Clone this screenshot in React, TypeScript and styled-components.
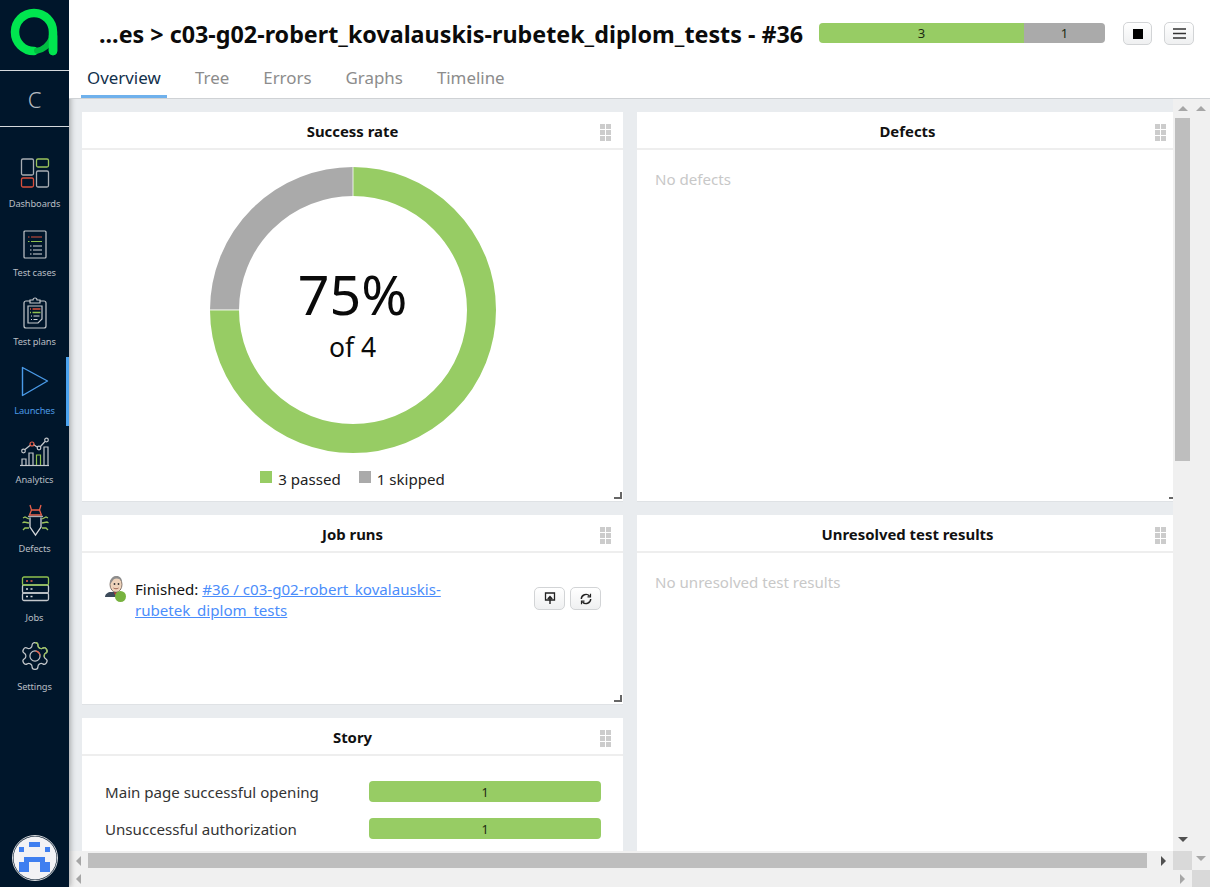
import React from 'react';
import styled, { createGlobalStyle } from 'styled-components';

const GlobalStyle = createGlobalStyle`
  html, body { margin: 0; padding: 0; height: 100%; overflow: hidden; }
  body { font-family: "Noto Sans", "Open Sans", "Liberation Sans", sans-serif; color: #111; background: #fff; }
  * { box-sizing: border-box; }
`;

const Shell = styled.div`
  display: flex;
  width: 1210px;
  height: 887px;
  overflow: hidden;
`;

const Sidebar = styled.nav`
  flex: 0 0 69px;
  display: flex;
  flex-direction: column;
  background: #00162b;
  box-shadow: 1px 0 6px rgba(0, 0, 0, 0.35);
  position: relative;
  z-index: 1;
`;

const LogoBox = styled.div`
  height: 71px;
  border-bottom: 1px solid #d5d9dd;
  display: flex;
  align-items: flex-start;
`;

const ProjectLetter = styled.div`
  height: 56px;
  border-bottom: 1px solid #d5d9dd;
  display: flex;
  align-items: center;
  justify-content: center;
  color: #b4bac0;
  font-size: 22px;
  font-weight: 300;
`;

const NavList = styled.div`
  padding-top: 23px;
  display: flex;
  flex-direction: column;
  flex: 1;
`;

const NavItem = styled.div<{ $active?: boolean }>`
  height: 69px;
  display: flex;
  flex-direction: column;
  align-items: center;
  border-right: 3px solid ${p => (p.$active ? '#4ba3f0' : 'transparent')};
  padding: 7px 0 0 3px;
  font-size: 9.3px;
  letter-spacing: -0.1px;
  color: ${p => (p.$active ? '#4c9be6' : '#b9bec4')};
  svg { display: block; flex: 0 0 32px; overflow: visible; }
`;

const NavLabel = styled.span`
  margin-top: 8px;
  line-height: 14px;
  white-space: nowrap;
`;

const AvatarBox = styled.div`
  height: 60px;
  padding-top: 8px;
  display: flex;
  justify-content: center;
  margin-right: -1px;
`;

const Main = styled.div`
  flex: 1;
  min-width: 0;
  display: flex;
  flex-direction: column;
`;

const Header = styled.header`
  height: 99px;
  background: #fff;
  border-bottom: 1px solid #cfd2d5;
  display: flex;
  flex-direction: column;
  position: relative;
  z-index: 2;
`;

const TopRow = styled.div`
  display: flex;
  align-items: center;
  height: 60px;
  padding: 7px 16px 0 30px;
`;

const Title = styled.h1`
  margin: 0;
  font-size: 23.3px;
  font-weight: 700;
  line-height: 32px;
  white-space: nowrap;
  flex: 0 0 720px;
  color: #0b0b0b;
`;

const SummaryBar = styled.div`
  flex: 0 0 286px;
  height: 20px;
  margin-top: -2px;
  display: flex;
  border-radius: 4px;
  overflow: hidden;
  font-size: 13px;
  line-height: 21px;
  text-align: center;
  box-shadow: inset 0 1px 0 rgba(0, 0, 0, 0.08);
`;

const BarPart = styled.div<{ $color: string; $grow: number }>`
  flex: ${p => p.$grow} 0 0;
  background: ${p => p.$color};
  color: #1b2a10;
`;

const Button = styled.button<{ $width?: number }>`
  width: ${p => p.$width ?? 30}px;
  height: 23px;
  padding: 0;
  border: 1px solid #d2d4d6;
  border-radius: 5px;
  background: linear-gradient(#ffffff, #eff0f1);
  display: flex;
  align-items: center;
  justify-content: center;
  flex: none;
`;

const HeaderActions = styled.div`
  display: flex;
  gap: 12px;
  margin-left: 18px;
`;

const Tabs = styled.div`
  display: flex;
  gap: 22px;
  padding-left: 12px;
  height: 38px;
`;

const Tab = styled.div<{ $active?: boolean }>`
  padding: 3px 6px 0;
  height: 38px;
  min-width: ${p => (p.$active ? '86px' : '0')};
  font-size: 16.9px;
  line-height: 29px;
  color: ${p => (p.$active ? '#12304c' : '#8c8c8c')};
  border-bottom: 3px solid ${p => (p.$active ? '#6fb1ec' : 'transparent')};
`;

const Frame = styled.div`
  flex: 1;
  min-height: 0;
  display: grid;
  grid-template-columns: 1104px 19px 18px;
  grid-template-rows: 752px 19px 17px;
  background: #f0f0f0;
`;

const Viewport = styled.div`
  grid-area: 1 / 1;
  overflow: hidden;
  background: #e9ecef;
  padding: 13px 0 0 13px;
  display: grid;
  grid-template-columns: 541px 541px;
  gap: 14px;
  align-items: start;
`;

const Column = styled.div`
  display: flex;
  flex-direction: column;
  gap: 14px;
`;

const Panel = styled.section<{ $height: number }>`
  height: ${p => p.$height}px;
  background: #fff;
  display: flex;
  flex-direction: column;
  position: relative;
  box-shadow: 0 1px 0 #dfe2e5;
`;

const PanelHead = styled.div`
  height: 38px;
  flex: none;
  padding-top: 1px;
  border-bottom: 2px solid #eeeeee;
  display: flex;
  align-items: center;
  justify-content: center;
  font-size: 14.9px;
  font-weight: 700;
  color: #111;
  position: relative;
`;

const Grip = styled.div`
  position: absolute;
  right: 12px;
  top: 12px;
  display: grid;
  grid-template-columns: 5px 5px;
  grid-auto-rows: 5px;
  gap: 1px;
  span { background: #cccccc; }
`;

const ResizeHandle = styled.div`
  position: absolute;
  right: 1px;
  bottom: 2px;
  width: 8px;
  height: 7px;
  border-right: 2px solid #666;
  border-bottom: 2px solid #666;
`;

const EmptyText = styled.div`
  padding: 19px 18px;
  font-size: 15.1px;
  line-height: 20px;
  color: #c8c8c8;
`;

const DonutBox = styled.div`
  position: relative;
  display: flex;
  justify-content: center;
  padding: 17px 0 0 1px;
  svg { display: block; }
`;

const DonutLabel = styled.div`
  position: absolute;
  inset: 17px 0 auto;
  height: 286px;
  padding-top: 5px;
  display: flex;
  flex-direction: column;
  align-items: center;
  justify-content: center;
`;

const Percent = styled.div`
  font-size: 55.5px;
  line-height: 64px;
  color: #0a0a0a;
`;

const OfTotal = styled.div`
  font-size: 26.5px;
  line-height: 32px;
  margin-top: 5px;
  color: #0a0a0a;
`;

const Legend = styled.div`
  display: flex;
  justify-content: center;
  gap: 18px;
  margin-top: 15px;
  font-size: 15.1px;
  line-height: 22px;
  color: #222;
`;

const LegendItem = styled.div`
  display: flex;
  align-items: center;
  gap: 6px;
`;

const Swatch = styled.span<{ $color: string }>`
  width: 12px;
  height: 12px;
  margin-top: -4px;
  background: ${p => p.$color};
`;

const JobRow = styled.div`
  display: flex;
  padding: 23px 22px 0 23px;
`;

const JobAvatar = styled.div`
  position: relative;
  flex: 0 0 30px;
  height: 26px;
`;

const StatusDot = styled.span`
  position: absolute;
  left: 10px;
  top: 15px;
  width: 11px;
  height: 11px;
  border-radius: 50%;
  background: #77b23f;
`;

const JobText = styled.div`
  flex: 1;
  font-size: 15.1px;
  line-height: 21px;
  margin-top: 3px;
  color: #111;
  a { color: #4b8dfb; text-decoration: underline; }
`;

const JobActions = styled.div`
  display: flex;
  gap: 5px;
  margin-top: 11px;
`;

const StoryList = styled.div`
  display: grid;
  grid-template-columns: 264px 232px;
  grid-auto-rows: 21px;
  row-gap: 16px;
  padding: 25px 0 0 23px;
  align-items: center;
`;

const StoryLabel = styled.div`
  font-size: 15.1px;
  color: #333;
  white-space: nowrap;
`;

const StoryBar = styled.div`
  height: 21px;
  background: #97cc64;
  border-radius: 4px;
  text-align: center;
  font-size: 12.5px;
  line-height: 23px;
  color: #1b2a10;
`;

const VTrack = styled.div<{ $outer?: boolean }>`
  grid-column: ${p => (p.$outer ? 3 : 2)};
  grid-row: ${p => (p.$outer ? '1 / 3' : 1)};
  display: flex;
  flex-direction: column;
  align-items: center;
  background: #f0f0f0;
`;

const HTrack = styled.div<{ $outer?: boolean }>`
  grid-column: ${p => (p.$outer ? '1 / 3' : 1)};
  grid-row: ${p => (p.$outer ? 3 : 2)};
  display: flex;
  align-items: center;
  background: #f0f0f0;
`;

const VThumb = styled.div`
  width: 15px;
  height: 343px;
  background: #bebebe;
`;

const HThumb = styled.div`
  width: 1059px;
  height: 15px;
  background: #bebebe;
`;

const ArrowCell = styled.div<{ $size: number; $push?: boolean }>`
  flex: 0 0 ${p => p.$size}px;
  display: flex;
  align-items: center;
  justify-content: center;
  ${p => (p.$push ? 'margin-top: auto;' : '')}
`;

const HArrowCell = styled.div<{ $width: number; $push?: boolean }>`
  flex: 0 0 ${p => p.$width}px;
  display: flex;
  align-items: center;
  justify-content: center;
  ${p => (p.$push ? 'margin-left: auto;' : '')}
`;

const Triangle = styled.span<{ $dir: 'up' | 'down' | 'left' | 'right'; $color: string }>`
  width: 0;
  height: 0;
  border-style: solid;
  border-color: transparent;
  ${p =>
    p.$dir === 'up'
      ? `border-width: 0 5px 5px; border-bottom-color: ${p.$color};`
      : p.$dir === 'down'
      ? `border-width: 5px 5px 0; border-top-color: ${p.$color};`
      : p.$dir === 'left'
      ? `border-width: 5px 5px 5px 0; border-right-color: ${p.$color};`
      : `border-width: 5px 0 5px 5px; border-left-color: ${p.$color};`}
`;

const Corner = styled.div<{ $outer?: boolean }>`
  grid-column: ${p => (p.$outer ? 3 : 2)};
  grid-row: ${p => (p.$outer ? 3 : 2)};
  background: #d9d9d9;
`;

const GREY = '#a8adb3';

const GripDots = () => (
  <Grip>
    {[0, 1, 2, 3, 4, 5].map(i => (
      <span key={i} />
    ))}
  </Grip>
);

const Logo = () => (
  <svg width="69" height="70" viewBox="0 0 69 70" fill="none">
    <path d="M34 51 A19 19 0 1 1 53 32 V51" stroke="#00e54f" strokeWidth="8.5" strokeLinecap="round" />
    <path d="M37 50.7 C43 50 49 45 52 38" stroke="#00bd41" strokeWidth="6" strokeLinecap="round" />
    <path d="M53 36 V51" stroke="#00e54f" strokeWidth="8.5" strokeLinecap="round" />
  </svg>
);

const DashboardsIcon = () => (
  <svg width="30" height="32" viewBox="0 0 30 32" fill="none" strokeWidth="1.3">
    <rect x="1.5" y="2" width="12" height="16" rx="1.5" stroke={GREY} />
    <rect x="16.5" y="2" width="12" height="8" rx="1.5" stroke="#9ac35b" />
    <rect x="1.5" y="21" width="12" height="9" rx="1.5" stroke="#d9503c" />
    <rect x="16.5" y="14" width="12" height="16" rx="1.5" stroke={GREY} />
  </svg>
);

const TestCasesIcon = () => (
  <svg width="30" height="32" viewBox="0 0 30 32" fill="none" strokeWidth="1.2">
    <g transform="translate(0 3)">
      <rect x="4" y="2" width="22" height="27" rx="1" stroke="#c4c8cc" />
      <path d="M8 8h1.5M11 8h11" stroke="#d9503c" />
      <path d="M8 12.5h1.5M11 12.5h11" stroke="#8fc14f" />
      <path d="M10 17h1.500M13 17h9M10 21h1.500M13 21h9M10 25h1.500M13 25h9" stroke="#d5d8db" />
    </g>
  </svg>
);

const TestPlansIcon = () => (
  <svg width="30" height="32" viewBox="0 0 30 32" fill="none" strokeWidth="1.2">
    <path d="M10 6H6a2 2 0 0 0-2 2v23a2 2 0 0 0 2 2h18a2 2 0 0 0 2-2V8a2 2 0 0 0-2-2h-4" stroke="#c4c8cc" />
    <path d="M10 8V5h3a2 2 0 0 1 4 0h3v3z" stroke="#c4c8cc" />
    <path d="M8 11h14v13l-4 4H8z" stroke="#c4c8cc" />
    <path d="M10 14h1M12.500 14h8" stroke="#d9503c" strokeWidth="1.500" />
    <path d="M10 17.500h1M12.500 17.500h8" stroke="#8fc14f" strokeWidth="1.500" />
    <path d="M11 21h1M13.500 21h6M11 24.500h1M13.500 24.500h4" stroke="#d5d8db" />
  </svg>
);

const LaunchesIcon = () => (
  <svg width="30" height="32" viewBox="0 0 30 32" fill="none">
    <path d="M2.500 3.500 L27.500 17 L2.500 31.500 Z" stroke="#4a9be8" strokeWidth="1.400" strokeLinejoin="round" />
  </svg>
);

const AnalyticsIcon = () => (
  <svg width="30" height="32" viewBox="0 0 30 32" fill="none" strokeWidth="1.2">
    <g transform="translate(0 3)">
      <path d="M0 29.500h29" stroke="#c4c8cc" />
      <path d="M2 29v-6h4v6M9 29V17h4v12M24 29V11h4v18" stroke="#c4c8cc" />
      <path d="M16.500 29V19h4v10" stroke="#8fc14f" />
      <path d="M5 13.500 L10.500 9M13.500 8.500 L17 11M20.500 10.500 L25 5.500" stroke="#c4c8cc" />
      <circle cx="3.500" cy="15" r="1.800" stroke="#c4c8cc" />
      <circle cx="12" cy="8" r="2" stroke="#e8604a" />
      <circle cx="19" cy="12" r="1.800" stroke="#c4c8cc" />
      <circle cx="26.500" cy="4" r="1.800" stroke="#c4c8cc" />
    </g>
  </svg>
);

const DefectsIcon = () => (
  <svg width="30" height="32" viewBox="0 0 30 32" fill="none" strokeWidth="1.3">
    <path d="M10 3 L11.500 8 L9.500 13 H21.500 L19.500 8 L21 3 M11.500 8 H19.500" stroke="#e8604a" />
    <path d="M8 14.500 H23" stroke="#a8adb3" />
    <path d="M10 15.500 V25 L15.500 33 L21 25 V15.500" stroke="#d5d8db" />
    <path d="M9 17 L5 15 L3 16 M9 21 L4 20 L2.500 21 M9 26 L5 26 L3 28" stroke="#9ac35b" />
    <path d="M22 17 L26 15 L28 16 M22 21 L27 20 L28.500 21 M22 26 L26 26 L28 28" stroke="#9ac35b" />
  </svg>
);

const JobsIcon = () => (
  <svg width="30" height="32" viewBox="0 0 30 32" fill="none" strokeWidth="1.3">
    <rect x="2.500" y="14" width="26" height="8" rx="1.500" stroke="#c4c8cc" />
    <rect x="2.500" y="22" width="26" height="7.500" rx="1.500" stroke="#c4c8cc" />
    <rect x="2.500" y="6" width="26" height="8" rx="1.500" stroke="#8fc14f" />
    <path d="M6 10h2M10.500 10h2" stroke="#e8604a" strokeWidth="1.600" />
    <path d="M6 18h2M10.500 18h2M6 25.500h2M10.500 25.500h2" stroke="#d5d8db" strokeWidth="1.600" />
  </svg>
);

const GEAR =
  'M12.22 2h-.44a2 2 0 0 0-2 2v.18a2 2 0 0 1-1 1.73l-.43.25a2 2 0 0 1-2 0l-.15-.08a2 2 0 0 0-2.73.73l-.22.38a2 2 0 0 0 .73 2.73l.15.1a2 2 0 0 1 1 1.72v.51a2 2 0 0 1-1 1.74l-.15.09a2 2 0 0 0-.73 2.73l.22.38a2 2 0 0 0 2.73.73l.15-.08a2 2 0 0 1 2 0l.43.25a2 2 0 0 1 1 1.73V20a2 2 0 0 0 2 2h.44a2 2 0 0 0 2-2v-.18a2 2 0 0 1 1-1.73l.43-.25a2 2 0 0 1 2 0l.15.08a2 2 0 0 0 2.73-.73l.22-.39a2 2 0 0 0-.73-2.73l-.15-.08a2 2 0 0 1-1-1.74v-.5a2 2 0 0 1 1-1.74l.15-.09a2 2 0 0 0 .73-2.73l-.22-.38a2 2 0 0 0-2.73-.73l-.15.08a2 2 0 0 1-2 0l-.43-.25a2 2 0 0 1-1-1.73V4a2 2 0 0 0-2-2z';

const SettingsIcon = () => (
  <svg width="32" height="32" viewBox="0 0 24 24" fill="none" strokeWidth="0.9">
    <defs>
      <clipPath id="gear-green">
        <path d="M12 0h12v13H12z" />
      </clipPath>
    </defs>
    <path d={GEAR} stroke="#c4c8cc" />
    <path d={GEAR} stroke="#9ac35b" clipPath="url(#gear-green)" />
    <circle cx="12" cy="12" r="3.800" stroke="#c4c8cc" />
    <path d="M12.500 8.300a3.800 3.800 0 0 1 3.300 3.200" stroke="#e8604a" />
  </svg>
);

const Avatar = () => (
  <svg width="46" height="46" viewBox="0 0 46 46">
    <circle cx="23" cy="23" r="22.500" fill="#00162b" stroke="#d8dbde" />
    <circle cx="23" cy="23" r="21.500" fill="#f2f2f5" />
    <g fill="#3f7ff0">
      <rect x="17" y="7" width="11" height="5" />
      <rect x="7" y="12" width="5" height="5" />
      <rect x="33" y="12" width="5" height="5" />
      <rect x="12" y="22" width="21" height="5" />
      <rect x="7" y="27" width="10" height="10" />
      <rect x="28" y="27" width="10" height="10" />
    </g>
  </svg>
);

const JenkinsHead = () => (
  <svg width="20" height="22" viewBox="0 0 20 22">
    <path d="M0 21c0-3 3-5 6-5h6l2 5z" fill="#3c4a5a" />
    <ellipse cx="11" cy="8.500" rx="6" ry="7.800" fill="#eed3bb" stroke="#6b5a50" strokeWidth="0.800" />
    <path d="M5 8c-.5-5 3-8 6.500-8s5.500 2.500 5.500 6l-2-2.500c-2.500-1.500-5-1-6.500 0-1 1-1.500 3-3.500 4.500z" fill="#8d8d8d" />
    <circle cx="9.500" cy="8" r="0.900" fill="#333" />
    <circle cx="13.500" cy="8" r="0.900" fill="#333" />
    <path d="M8.500 12c1.500 1 3.500 1 5 0" stroke="#8a4a3a" strokeWidth="0.800" fill="none" />
    <path d="M9 16l2 1 2-1-1 3h-2z" fill="#c33" />
  </svg>
);

const StopIcon = () => (
  <svg width="10" height="10" viewBox="0 0 10 10">
    <rect width="10" height="10" fill="#000" />
  </svg>
);

const MenuIcon = () => (
  <svg width="13" height="11" viewBox="0 0 13 11">
    <path d="M0 1h13M0 5.500h13M0 10h13" stroke="#333" strokeWidth="1.600" />
  </svg>
);

const RerunIcon = () => (
  <svg width="12" height="13" viewBox="0 0 12 13" fill="none">
    <path d="M1.500 1h9v7h-9z" stroke="#222" strokeWidth="1.300" />
    <path d="M6 12V5M3.800 7L6 4.500 8.200 7" stroke="#222" strokeWidth="1.400" />
  </svg>
);

const RefreshIcon = () => (
  <svg width="12" height="12" viewBox="0 0 12 12" fill="none" stroke="#222" strokeWidth="1.400">
    <path d="M1.300 6A4.700 4.700 0 0 1 9.500 3" />
    <path d="M10.700 6A4.700 4.700 0 0 1 2.500 9" />
    <path d="M10.500 0.800V3.800H7.500M1.500 11.200V8.200H4.500" strokeWidth="1.200" />
  </svg>
);

const Donut = () => {
  const r = 128.5;
  const c = 2 * Math.PI * r;
  return (
    <svg width="286" height="286" viewBox="0 0 286 286">
      <g transform="rotate(-90 143 143)" fill="none" strokeWidth="29">
        <circle cx="143" cy="143" r={r} stroke="#97cc64" strokeDasharray={`${c * 0.75} ${c}`} />
        <circle cx="143" cy="143" r={r} stroke="#aaaaaa" strokeDasharray={`${c * 0.25} ${c}`} strokeDashoffset={-c * 0.75} />
      </g>
      <path d="M143 0v29M0 143h29" stroke="#fff" strokeWidth="0.800" />
    </svg>
  );
};

const navItems = [
  { label: 'Dashboards', icon: <DashboardsIcon /> },
  { label: 'Test cases', icon: <TestCasesIcon /> },
  { label: 'Test plans', icon: <TestPlansIcon /> },
  { label: 'Launches', icon: <LaunchesIcon />, active: true },
  { label: 'Analytics', icon: <AnalyticsIcon /> },
  { label: 'Defects', icon: <DefectsIcon /> },
  { label: 'Jobs', icon: <JobsIcon /> },
  { label: 'Settings', icon: <SettingsIcon /> },
];

const tabs = ['Overview', 'Tree', 'Errors', 'Graphs', 'Timeline'];

const App: React.FC = () => {
  return (
    <Shell>
      <GlobalStyle />
      <Sidebar>
        <LogoBox>
          <Logo />
        </LogoBox>
        <ProjectLetter>C</ProjectLetter>
        <NavList>
          {navItems.map(item => (
            <NavItem key={item.label} $active={item.active}>
              {item.icon}
              <NavLabel>{item.label}</NavLabel>
            </NavItem>
          ))}
        </NavList>
        <AvatarBox>
          <Avatar />
        </AvatarBox>
      </Sidebar>
      <Main>
        <Header>
          <TopRow>
            <Title>...es &gt; c03-g02-robert_kovalauskis-rubetek_diplom_tests - #36</Title>
            <SummaryBar>
              <BarPart $color="#97cc64" $grow={205}>3</BarPart>
              <BarPart $color="#aaaaaa" $grow={81}>1</BarPart>
            </SummaryBar>
            <HeaderActions>
              <Button $width={29}>
                <StopIcon />
              </Button>
              <Button>
                <MenuIcon />
              </Button>
            </HeaderActions>
          </TopRow>
          <Tabs>
            {tabs.map((tab, i) => (
              <Tab key={tab} $active={i === 0}>
                {tab}
              </Tab>
            ))}
          </Tabs>
        </Header>
        <Frame>
          <Viewport>
            <Column>
              <Panel $height={389}>
                <PanelHead>
                  Success rate
                  <GripDots />
                </PanelHead>
                <DonutBox>
                  <Donut />
                  <DonutLabel>
                    <Percent>75%</Percent>
                    <OfTotal>of 4</OfTotal>
                  </DonutLabel>
                </DonutBox>
                <Legend>
                  <LegendItem>
                    <Swatch $color="#97cc64" />3 passed
                  </LegendItem>
                  <LegendItem>
                    <Swatch $color="#aaaaaa" />1 skipped
                  </LegendItem>
                </Legend>
                <ResizeHandle />
              </Panel>
              <Panel $height={189}>
                <PanelHead>
                  Job runs
                  <GripDots />
                </PanelHead>
                <JobRow>
                  <JobAvatar>
                    <JenkinsHead />
                    <StatusDot />
                  </JobAvatar>
                  <JobText>
                    Finished: <a href="#job">#36 / c03-g02-robert_kovalauskis-rubetek_diplom_tests</a>
                  </JobText>
                  <JobActions>
                    <Button $width={31}>
                      <RerunIcon />
                    </Button>
                    <Button $width={31}>
                      <RefreshIcon />
                    </Button>
                  </JobActions>
                </JobRow>
                <ResizeHandle />
              </Panel>
              <Panel $height={400}>
                <PanelHead>
                  Story
                  <GripDots />
                </PanelHead>
                <StoryList>
                  <StoryLabel>Main page successful opening</StoryLabel>
                  <StoryBar>1</StoryBar>
                  <StoryLabel>Unsuccessful authorization</StoryLabel>
                  <StoryBar>1</StoryBar>
                </StoryList>
              </Panel>
            </Column>
            <Column>
              <Panel $height={389}>
                <PanelHead>
                  Defects
                  <GripDots />
                </PanelHead>
                <EmptyText>No defects</EmptyText>
                <ResizeHandle />
              </Panel>
              <Panel $height={600}>
                <PanelHead>
                  Unresolved test results
                  <GripDots />
                </PanelHead>
                <EmptyText>No unresolved test results</EmptyText>
              </Panel>
            </Column>
          </Viewport>
          <VTrack>
            <ArrowCell $size={19}>
              <Triangle $dir="up" $color="#a6a6a6" />
            </ArrowCell>
            <VThumb />
            <ArrowCell $size={23} $push>
              <Triangle $dir="down" $color="#505050" />
            </ArrowCell>
          </VTrack>
          <VTrack $outer>
            <ArrowCell $size={19}>
              <Triangle $dir="up" $color="#a6a6a6" />
            </ArrowCell>
            <ArrowCell $size={23} $push>
              <Triangle $dir="down" $color="#a6a6a6" />
            </ArrowCell>
          </VTrack>
          <HTrack>
            <HArrowCell $width={19}>
              <Triangle $dir="left" $color="#a6a6a6" />
            </HArrowCell>
            <HThumb />
            <HArrowCell $width={19} $push>
              <Triangle $dir="right" $color="#505050" />
            </HArrowCell>
          </HTrack>
          <Corner />
          <HTrack $outer>
            <HArrowCell $width={19}>
              <Triangle $dir="left" $color="#a6a6a6" />
            </HArrowCell>
            <HArrowCell $width={19} $push>
              <Triangle $dir="right" $color="#a6a6a6" />
            </HArrowCell>
          </HTrack>
          <Corner $outer />
        </Frame>
      </Main>
    </Shell>
  );
};

export default App;
